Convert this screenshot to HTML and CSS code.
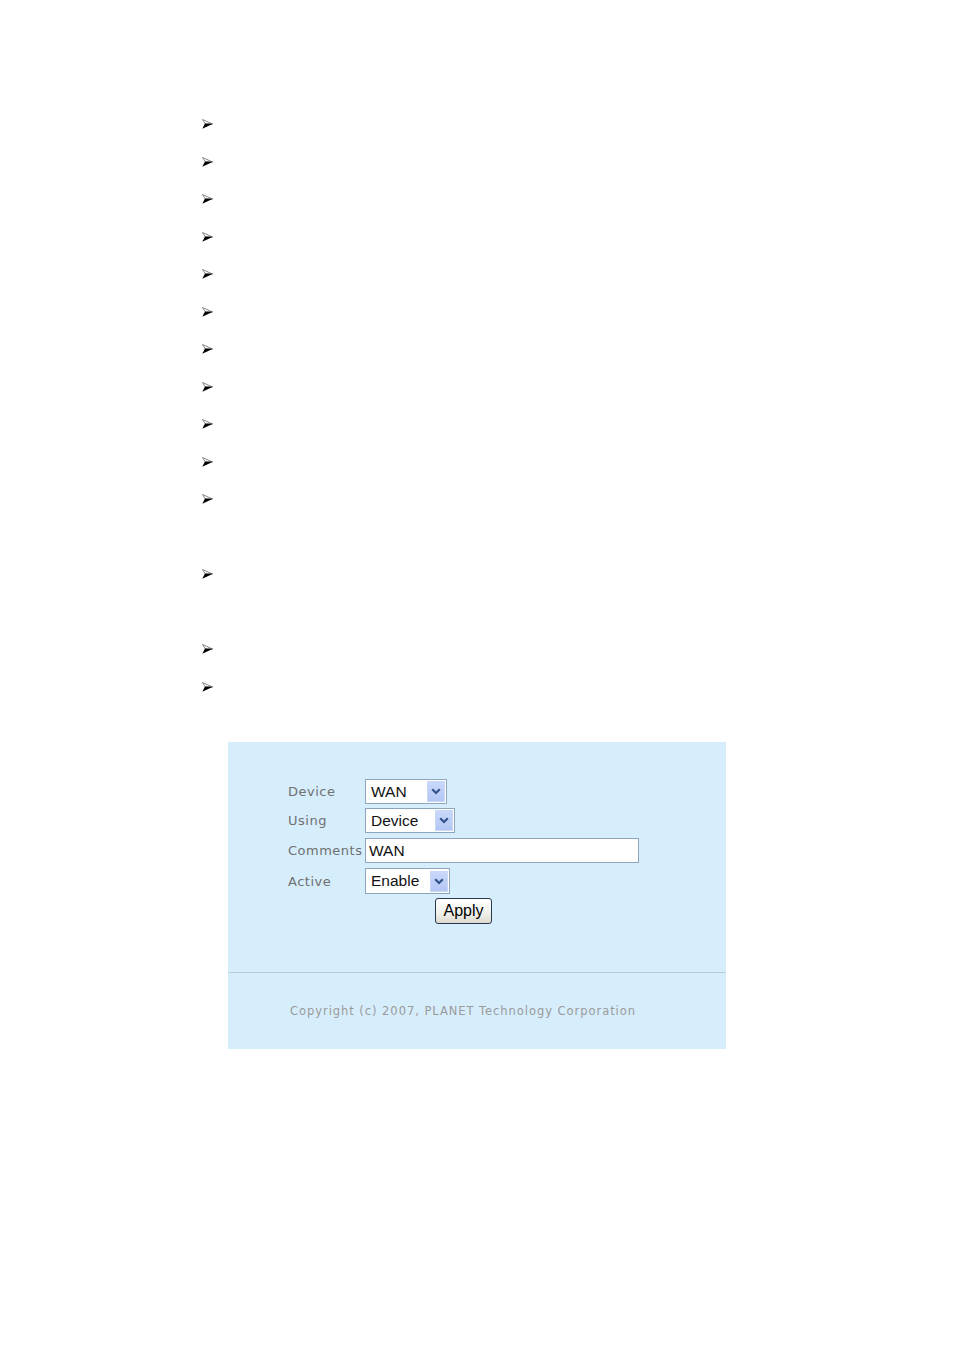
FILE: index.html
```html
<!DOCTYPE html>
<html>
<head>
<meta charset="utf-8">
<link rel="stylesheet" href="styles.css">
</head>
<body>
<ul class="bullets">
  <li class="item"><svg class="arrow" viewBox="0 0 11 10" width="11" height="10"><polygon points="0.5,0.5 10.5,5 3.5,5.2" fill="#fff" stroke="#7a7a7a" stroke-width="0.9"/><polygon points="3,4.6 11,4.8 0.3,9.8" fill="#000"/></svg></li>
  <li class="item"><svg class="arrow" viewBox="0 0 11 10" width="11" height="10"><polygon points="0.5,0.5 10.5,5 3.5,5.2" fill="#fff" stroke="#7a7a7a" stroke-width="0.9"/><polygon points="3,4.6 11,4.8 0.3,9.8" fill="#000"/></svg></li>
  <li class="item"><svg class="arrow" viewBox="0 0 11 10" width="11" height="10"><polygon points="0.5,0.5 10.5,5 3.5,5.2" fill="#fff" stroke="#7a7a7a" stroke-width="0.9"/><polygon points="3,4.6 11,4.8 0.3,9.8" fill="#000"/></svg></li>
  <li class="item"><svg class="arrow" viewBox="0 0 11 10" width="11" height="10"><polygon points="0.5,0.5 10.5,5 3.5,5.2" fill="#fff" stroke="#7a7a7a" stroke-width="0.9"/><polygon points="3,4.6 11,4.8 0.3,9.8" fill="#000"/></svg></li>
  <li class="item"><svg class="arrow" viewBox="0 0 11 10" width="11" height="10"><polygon points="0.5,0.5 10.5,5 3.5,5.2" fill="#fff" stroke="#7a7a7a" stroke-width="0.9"/><polygon points="3,4.6 11,4.8 0.3,9.8" fill="#000"/></svg></li>
  <li class="item"><svg class="arrow" viewBox="0 0 11 10" width="11" height="10"><polygon points="0.5,0.5 10.5,5 3.5,5.2" fill="#fff" stroke="#7a7a7a" stroke-width="0.9"/><polygon points="3,4.6 11,4.8 0.3,9.8" fill="#000"/></svg></li>
  <li class="item"><svg class="arrow" viewBox="0 0 11 10" width="11" height="10"><polygon points="0.5,0.5 10.5,5 3.5,5.2" fill="#fff" stroke="#7a7a7a" stroke-width="0.9"/><polygon points="3,4.6 11,4.8 0.3,9.8" fill="#000"/></svg></li>
  <li class="item"><svg class="arrow" viewBox="0 0 11 10" width="11" height="10"><polygon points="0.5,0.5 10.5,5 3.5,5.2" fill="#fff" stroke="#7a7a7a" stroke-width="0.9"/><polygon points="3,4.6 11,4.8 0.3,9.8" fill="#000"/></svg></li>
  <li class="item"><svg class="arrow" viewBox="0 0 11 10" width="11" height="10"><polygon points="0.5,0.5 10.5,5 3.5,5.2" fill="#fff" stroke="#7a7a7a" stroke-width="0.9"/><polygon points="3,4.6 11,4.8 0.3,9.8" fill="#000"/></svg></li>
  <li class="item"><svg class="arrow" viewBox="0 0 11 10" width="11" height="10"><polygon points="0.5,0.5 10.5,5 3.5,5.2" fill="#fff" stroke="#7a7a7a" stroke-width="0.9"/><polygon points="3,4.6 11,4.8 0.3,9.8" fill="#000"/></svg></li>
  <li class="item tall"><svg class="arrow" viewBox="0 0 11 10" width="11" height="10"><polygon points="0.5,0.5 10.5,5 3.5,5.2" fill="#fff" stroke="#7a7a7a" stroke-width="0.9"/><polygon points="3,4.6 11,4.8 0.3,9.8" fill="#000"/></svg></li>
  <li class="item tall"><svg class="arrow" viewBox="0 0 11 10" width="11" height="10"><polygon points="0.5,0.5 10.5,5 3.5,5.2" fill="#fff" stroke="#7a7a7a" stroke-width="0.9"/><polygon points="3,4.6 11,4.8 0.3,9.8" fill="#000"/></svg></li>
  <li class="item"><svg class="arrow" viewBox="0 0 11 10" width="11" height="10"><polygon points="0.5,0.5 10.5,5 3.5,5.2" fill="#fff" stroke="#7a7a7a" stroke-width="0.9"/><polygon points="3,4.6 11,4.8 0.3,9.8" fill="#000"/></svg></li>
  <li class="item"><svg class="arrow" viewBox="0 0 11 10" width="11" height="10"><polygon points="0.5,0.5 10.5,5 3.5,5.2" fill="#fff" stroke="#7a7a7a" stroke-width="0.9"/><polygon points="3,4.6 11,4.8 0.3,9.8" fill="#000"/></svg></li>
</ul>

<div class="panel">
  <div class="form">
    <div class="row r1">
      <span class="label">Device</span>
      <span class="select w82"><span class="value">WAN</span><span class="drop"><svg viewBox="0 0 10 7" width="10" height="7"><polyline points="1.2,1.2 5,5 8.8,1.2" fill="none" stroke="#34528a" stroke-width="2.2"/></svg></span></span>
    </div>
    <div class="row r2">
      <span class="label">Using</span>
      <span class="select w90"><span class="value">Device</span><span class="drop"><svg viewBox="0 0 10 7" width="10" height="7"><polyline points="1.2,1.2 5,5 8.8,1.2" fill="none" stroke="#34528a" stroke-width="2.2"/></svg></span></span>
    </div>
    <div class="row r3">
      <span class="label">Comments</span>
      <span class="input"><span class="value">WAN</span></span>
    </div>
    <div class="row r4">
      <span class="label">Active</span>
      <span class="select w85"><span class="value">Enable</span><span class="drop"><svg viewBox="0 0 10 7" width="10" height="7"><polyline points="1.2,1.2 5,5 8.8,1.2" fill="none" stroke="#34528a" stroke-width="2.2"/></svg></span></span>
    </div>
    <div class="btnrow">
      <span class="button">Apply</span>
    </div>
  </div>
  <div class="footer">Copyright (c) 2007, PLANET Technology Corporation</div>
</div>
</body>
</html>
```

FILE: styles.css
```css
html, body {
  margin: 0;
  padding: 0;
  background: #ffffff;
  font-family: "DejaVu Sans", Verdana, sans-serif;
}

.bullets {
  list-style: none;
  margin: 0;
  padding: 105px 0 0 202px;
}

.item {
  height: 37.5px;
  display: flex;
  align-items: flex-start;
  padding-top: 14px;
  box-sizing: border-box;
}

.item.tall {
  height: 75px;
}

.arrow {
  display: block;
}

.panel {
  margin: 37px 0 0 228px;
  width: 498px;
  height: 307px;
  background: #d6edfc;
  display: flex;
  flex-direction: column;
}

.form {
  height: 231px;
  box-sizing: border-box;
  padding: 37px 0 0 60px;
  border-bottom: 1px solid #bccbd6;
  display: flex;
  flex-direction: column;
}

.row {
  display: flex;
  align-items: center;
  height: 25px;
}

.r2 { margin-top: 4px; }
.r3 { margin-top: 5px; }
.r4 { margin-top: 5px; height: 26px; }

.label {
  width: 77px;
  font-size: 13px;
  letter-spacing: 0.5px;
  color: #707070;
  white-space: nowrap;
}

.select, .input {
  height: 25px;
  box-sizing: border-box;
  border: 1px solid #8ea6bd;
  background: #ffffff;
  display: flex;
  align-items: center;
  justify-content: space-between;
  padding: 0 1px 0 5px;
  font-family: "Liberation Sans", Arial, sans-serif;
  font-size: 15.5px;
  color: #111;
}

.r4 .select { height: 26px; }

.w82 { width: 82px; }
.w90 { width: 90px; }
.w85 { width: 85px; }

.input {
  width: 274px;
  padding-left: 3px;
}

.drop {
  width: 18px;
  height: 21px;
  background: linear-gradient(#c9d8fb, #b3c6f4);
  border: 1px solid #cbd8f4;
  box-sizing: border-box;
  display: flex;
  align-items: center;
  justify-content: center;
}

.drop svg { display: block; }

.btnrow {
  margin-top: 4px;
  padding-left: 147px;
  display: flex;
}

.button {
  width: 57px;
  height: 26px;
  box-sizing: border-box;
  border: 1px solid #2a3a4e;
  border-radius: 3px;
  background: linear-gradient(#ffffff, #f0f0ea 60%, #dcdad0);
  font-family: "Liberation Sans", Arial, sans-serif;
  font-size: 16px;
  color: #000;
  display: flex;
  align-items: center;
  justify-content: center;
}

.footer {
  flex: 1;
  display: flex;
  align-items: center;
  padding-left: 62px;
  font-size: 11.5px;
  letter-spacing: 0.95px;
  color: #9a9a9a;
}
```
